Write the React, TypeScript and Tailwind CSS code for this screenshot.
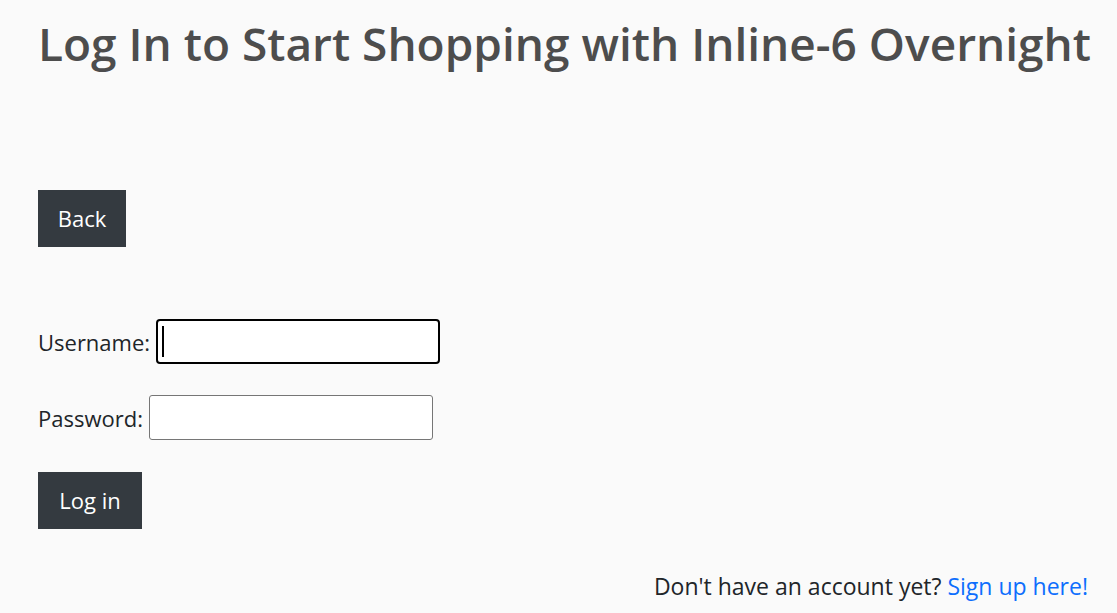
import React from "react";

export default function App() {
  return (
    <div
      className="min-h-screen w-full bg-[#fafafa] text-[#212529]"
      style={{ fontFamily: '"Open Sans", "Noto Sans", sans-serif' }}
    >
      <div className="flex flex-col pl-[38px] pr-[29px]">
        <h1 className="pt-[11px] text-[46px] font-semibold leading-[64px] text-[#4d4d4d] whitespace-nowrap">
          Log In to Start Shopping with Inline-6 Overnight
        </h1>
        <div className="mt-[115px]">
          <button className="h-[57px] w-[88px] bg-[#343a40] text-[22px] text-white">
            Back
          </button>
        </div>
        <form className="mt-[72px] flex flex-col" onSubmit={(e) => e.preventDefault()}>
          <div className="flex items-center h-[45px]">
            <label className="text-[22px] leading-none">Username:</label>
            <div className="relative ml-[6px]">
              <input
                type="text"
                className="h-[45px] w-[284px] rounded-[4px] border-2 border-black bg-white px-[6px] outline-none caret-transparent"
              />
              <span className="pointer-events-none absolute left-[6px] top-[7px] h-[31px] w-[2px] bg-black" />
            </div>
          </div>
          <div className="mt-[31px] flex items-center h-[45px]">
            <label className="text-[22px] leading-none">Password:</label>
            <input
              type="password"
              className="ml-[6px] h-[45px] w-[284px] rounded-[3px] border border-[#767676] bg-white px-[6px] outline-none"
            />
          </div>
          <div className="mt-[32px]">
            <button className="h-[57px] w-[104px] bg-[#343a40] text-[22px] text-white">
              Log in
            </button>
          </div>
        </form>
        <div className="mt-[40px] text-right text-[23px]">
          Don't have an account yet?{" "}
          <a href="#" className="text-[#0d6efd]">
            Sign up here!
          </a>
        </div>
      </div>
    </div>
  );
}
